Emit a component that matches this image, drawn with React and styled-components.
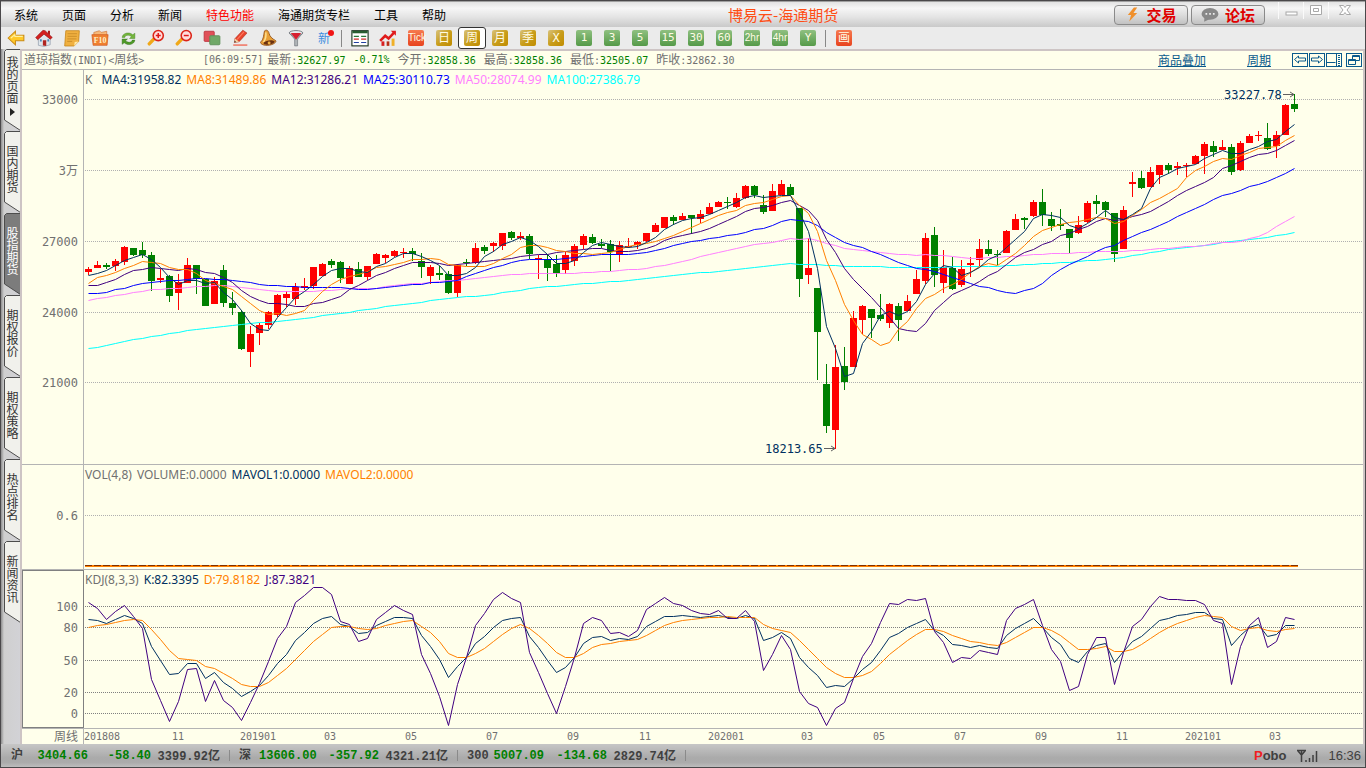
import styled, { createGlobalStyle, css } from 'styled-components';

const GlobalStyle = createGlobalStyle`
  html, body, #root {
    height: 100%;
    margin: 0;
    padding: 0;
    overflow: hidden;
  }
  * {
    box-sizing: border-box;
  }
  body {
    font-family: 'Noto Sans CJK SC', 'Noto Sans', sans-serif;
    font-size: 12px;
    color: #000;
  }
  button {
    font: inherit;
    padding: 0;
    margin: 0;
    border: 0;
    background: none;
    cursor: pointer;
  }
`;

const mono = css`
  font-family: 'DejaVu Sans Mono', 'Noto Sans CJK SC', monospace;
`;

/* ---------- data ---------- */

// r = up week, g = down week, then high, body top, body bottom, low
const CANDLES = `r267,269,272,275 r261,265,268,268 g263,265,267,269 r259,261,266,271 r246,247,262,265
g248,248,255,256 g242,250,255,258 g252,255,281,291 r269,278,280,283 g275,276,296,302
r274,282,293,310 r258,265,283,283 g265,265,279,294 g279,279,306,306 r277,281,304,304
g265,270,303,307 g292,303,308,315 g310,312,349,350 r326,334,352,367 r323,325,333,345
r311,312,325,329 r294,295,315,317 r291,294,298,307 r283,287,299,305 r278,286,288,290
r267,267,286,289 r263,264,276,276 g259,261,265,268 g261,262,278,283 r266,268,284,284
g262,269,277,277 r266,266,277,280 r253,254,264,264 r254,255,258,263 r250,251,256,257
r248,252,253,258 g248,251,254,261 g253,261,267,278 r265,267,276,284 g266,273,275,280
g271,274,293,294 r264,265,293,297 g259,262,263,266 r243,248,263,264 g245,247,251,254
r242,243,246,252 r233,233,246,250 g231,232,238,240 r232,236,238,240 g234,236,254,259
r255,258,259,279 g254,259,268,281 g255,264,273,277 r252,255,270,274 r244,246,261,266
r234,236,245,249 g234,237,243,244 g239,244,246,248 g240,244,252,271 r241,245,254,262
r238,246,247,248 r241,242,245,249 r233,233,241,242 r223,225,232,232 r217,217,228,228
g215,217,221,225 r213,216,220,220 g215,215,218,234 r210,214,219,223 r203,207,214,214
r201,202,207,207 g197,202,203,209 r193,198,207,208 r185,186,198,199 g185,186,195,198
g195,205,212,214 r184,191,211,211 r180,184,195,195 g184,187,195,196 g208,208,279,297
r238,268,275,284 g288,288,332,380 g364,384,426,433 r345,367,430,449 g347,366,382,390
r311,318,367,367 r305,306,320,334 g309,309,318,338 g294,315,319,321 r303,304,323,328
g303,306,320,341 r295,301,311,311 r270,279,294,294 r233,238,281,284 g227,235,275,287
r250,267,283,293 g257,268,289,290 r260,269,285,287 r257,263,265,277 r239,249,260,266
g240,249,254,256 g250,254,255,265 r230,231,253,253 r214,219,230,230 g217,218,220,229
r200,202,216,217 g189,202,215,226 g212,219,226,231 g209,224,226,230 g229,229,238,253
r216,225,233,234 r201,203,222,223 g195,201,204,214 g201,202,210,217 g213,213,254,262
r206,210,249,249 r172,182,184,197 g171,178,188,189 r167,172,187,187 r165,165,175,184
g163,165,170,174 r162,166,168,175 r163,165,166,177 r155,156,164,164 r142,144,156,174
g141,146,152,157 r140,147,150,150 g144,147,172,175 r141,143,170,171 r134,136,143,143
r131,135,136,141 g123,138,149,150 r131,135,146,158 r104,105,135,135 g94,104,109,112`
  .split(/\s+/)
  .map((row) => {
    const [high, top, bottom, low] = row.slice(1).split(',').map(Number);
    const up = row[0] === 'r';
    return { up, high, top, bottom, low, close: up ? top : bottom - 1 };
  });

const PRICE_TOP = 70;
const STEP = 9;
const xAt = (i) => 4 + i * STEP;

// moving average of the closes, the first weeks come from older history
const average = (n, history) =>
  CANDLES.map((_, i) => {
    if (i < history.length) return history[i];
    const part = CANDLES.slice(i - n + 1, i + 1);
    return part.reduce((sum, c) => sum + c.close, 0) / n;
  });

const interpolate = (points) =>
  CANDLES.map((_, i) => {
    const k = points.findIndex(([at]) => at >= i);
    if (k <= 0) return points[0][1];
    const [x0, y0] = points[k - 1];
    const [x1, y1] = points[k];
    return Math.round(y0 + ((y1 - y0) * (i - x0)) / (x1 - x0));
  });

const MA_LINES = [
  {
    color: '#00ffff',
    values: interpolate([
      [0, 348], [2, 345], [4, 341], [7, 336], [11, 330], [17, 324], [22, 320], [28, 313],
      [34, 305], [41, 297], [44, 295], [47, 291], [50, 287], [54, 284], [60, 280], [66, 274],
      [72, 269], [78, 263], [80, 264], [85, 266], [92, 267], [99, 266], [103, 265], [106, 263],
      [110, 261], [114, 258], [120, 249], [124, 245], [127, 241], [131, 237], [134, 232],
    ]),
  },
  {
    color: '#ff80ff',
    values: average(50, [
      300, 298, 297, 295, 294, 292, 291, 289, 289, 288, 288, 287, 286, 286, 285, 285, 286,
      287, 288, 289, 290, 291, 291, 291, 291, 291, 290, 290, 289, 288, 288, 288, 288, 286,
      285, 284, 283, 283, 282, 281, 280, 280, 279, 278, 277, 276, 275, 274, 274,
    ]),
  },
  {
    color: '#0000ff',
    values: average(25, [
      293, 293, 292, 289, 288, 285, 283, 282, 281, 280, 280, 279, 278, 278, 279, 279, 280,
      281, 282, 284, 285, 285, 286, 286,
    ]),
  },
  {
    color: '#400080',
    values: average(12, [285, 285, 282, 279, 274, 270, 269, 267, 268, 269, 270]),
  },
  { color: '#ff8000', values: average(8, [283, 277, 275, 272, 268, 265, 261]) },
  { color: '#003060', values: average(4, [275, 273, 270]) },
];

// depth below the top of the panel, in thirds
const KDJ_J = [
  96, 115, 148, 124, 106, 137, 175, 328, 390, 452, 394, 298, 295, 394, 331, 389, 411, 451,
  397, 340, 273, 204, 169, 95, 76, 52, 50, 73, 152, 163, 214, 203, 148, 125, 106, 119, 133,
  253, 308, 379, 466, 342, 262, 164, 130, 88, 67, 85, 97, 245, 305, 370, 428, 348, 262, 160,
  142, 151, 190, 187, 199, 181, 118, 100, 82, 100, 106, 121, 130, 133, 121, 145, 145, 121,
  152, 301, 253, 196, 236, 364, 400, 412, 466, 415, 397, 325, 259, 220, 157, 100, 103, 88,
  91, 85, 182, 217, 277, 262, 265, 241, 247, 253, 151, 115, 102, 88, 166, 238, 274, 361,
  349, 253, 202, 202, 341, 245, 169, 148, 108, 79, 88, 88, 91, 91, 103, 151, 160, 341, 229,
  166, 140, 232, 212, 142, 148,
];
const KDJ_D = [
  171, 166, 163, 157, 151, 148, 151, 178, 208, 241, 265, 268, 271, 289, 295, 309, 325, 343,
  348, 347, 337, 316, 295, 268, 241, 214, 191, 172, 169, 169, 175, 178, 175, 166, 160, 154,
  151, 167, 186, 212, 250, 262, 262, 248, 234, 212, 191, 175, 163, 175, 194, 220, 247, 262,
  262, 250, 232, 223, 218, 214, 211, 208, 194, 181, 166, 157, 151, 146, 145, 142, 140, 139,
  142, 140, 140, 163, 175, 179, 187, 211, 238, 265, 292, 310, 322, 322, 314, 302, 280, 253,
  232, 211, 193, 178, 178, 184, 196, 205, 214, 217, 223, 226, 217, 202, 187, 172, 172, 181,
  196, 217, 238, 238, 235, 229, 244, 244, 236, 223, 205, 187, 172, 160, 151, 142, 136, 139,
  142, 169, 179, 175, 172, 181, 184, 178, 175,
];
const KDJ_K = KDJ_J.map((j, i) => (j + 2 * KDJ_D[i]) / 3);

const DATES = [
  ['201808', 0], ['11', 88], ['201901', 156], ['03', 240], ['05', 321], ['07', 402],
  ['09', 483], ['11', 555], ['202001', 624], ['03', 717], ['05', 789], ['07', 870],
  ['09', 951], ['11', 1032], ['202101', 1101], ['03', 1185],
];

const MENUS = ['系统', '页面', '分析', '新闻', '特色功能', '海通期货专栏', '工具', '帮助'];
const TABS = ['我的页面', '国内期货', '股指期货', '期权报价', '期权策略', '热点排名', '新闻资讯'];

const INDEXES = [
  { name: '沪', last: '3404.66', change: '-58.40', amount: '3399.92' },
  { name: '深', last: '13606.00', change: '-357.92', amount: '4321.21' },
  { name: '300', last: '5007.09', change: '-134.68', amount: '2829.74' },
];

/* ---------- frame ---------- */

const Window = styled.div`
  height: 100vh;
  display: flex;
  flex-direction: column;
  border: 1px solid #4a484a;
  background: #ebebeb;
`;

const TitleBar = styled.header`
  height: 26px;
  flex-shrink: 0;
  display: flex;
  align-items: center;
  border-top: 1px solid #a0a0a0;
  background: linear-gradient(#e2e2e2, #f6f6f6 25%, #e4e4e4 60%, #c9c9c9);
`;

const MenuList = styled.nav`
  display: flex;
  padding-left: 1px;
`;

const MenuItem = styled.button`
  padding: 0 12px;
  line-height: 20px;
  color: ${(p) => (p.$hot ? '#ff0000' : '#000')};
`;

const AppTitle = styled.h1`
  flex: 1;
  margin: 0;
  padding-right: 6px;
  text-align: center;
  font-size: 15px;
  font-weight: 400;
  line-height: 22px;
  color: #ff4d14;
`;

const PillButton = styled.button`
  width: 74px;
  height: 20px;
  margin-right: 3px;
  display: flex;
  align-items: center;
  justify-content: center;
  gap: 6px;
  border: 1px solid #8a8a8a;
  border-radius: 4px;
  background: linear-gradient(#f2f2f2, #dcdcdc 50%, #c2c2c2);
  font-size: 15px;
  font-weight: 700;
  line-height: 16px;
  color: #e00000;
`;

const WindowControls = styled.div`
  display: flex;
  align-self: flex-start;
  margin-left: 10px;
  padding-right: 3px;
`;

const WindowButton = styled.button`
  width: ${(p) => (p.$wide ? 34 : 25)}px;
  height: 17px;
  display: flex;
  align-items: center;
  justify-content: center;
  border-left: 1px solid #fafafa;
`;

const ToolBar = styled.div`
  height: 22px;
  flex-shrink: 0;
  display: flex;
  align-items: center;
  padding-left: 1px;
  background: #ebebeb;
`;

const ToolButton = styled.button`
  width: 28px;
  height: 22px;
  display: flex;
  align-items: center;
  justify-content: center;
  ${(p) =>
    p.$active &&
    css`
      border: 1px solid #333;
      border-radius: 3px;
      background: #fff;
    `}
`;

const ToolSeparator = styled.span`
  width: 1px;
  height: 17px;
  margin: 0 4px 0 3px;
  background: #888;
`;

const tones = {
  gold: 'linear-gradient(135deg, #d8c27c, #c99e1c 50%, #c08c00)',
  green: 'linear-gradient(#8fc080, #559a48)',
  red: 'linear-gradient(#f67a50, #e8441e)',
};

const Tile = styled.span`
  width: 16px;
  height: 16px;
  border-radius: 2px;
  background: ${(p) => tones[p.$tone]};
  color: #fffbe4;
  font-family: ${(p) =>
    p.$narrow
      ? "'Liberation Sans Narrow', 'Liberation Sans', sans-serif"
      : "'DejaVu Sans Mono', 'Noto Sans CJK SC', monospace"};
  font-size: ${(p) => p.$size || 12}px;
  line-height: 16px;
  text-align: center;
`;

const NewMark = styled.span`
  position: relative;
  line-height: 16px;
  font-size: 12px;
  color: #3d8ee0;

  &::after {
    content: '';
    position: absolute;
    top: 0;
    right: -4px;
    width: 6px;
    height: 6px;
    border-radius: 50%;
    background: #f01414;
  }
`;

const Body = styled.div`
  flex: 1;
  min-height: 0;
  display: flex;
`;

const SideTabs = styled.nav`
  width: 19px;
  flex-shrink: 0;
  padding-left: 3px;
  background: linear-gradient(90deg, #8e8e8e, #cfcfcf 3px, #d2d2d6);
  display: flex;
  flex-direction: column;
`;

const SideTab = styled.button`
  height: 82px;
  flex-shrink: 0;
  display: grid;
  color: ${(p) => (p.$active ? '#fff' : '#333')};

  svg,
  span {
    grid-area: 1 / 1;
  }
  path {
    fill: ${(p) => (p.$active ? '#7c7c7c' : '#f1f1ec')};
    stroke: #4c4c4c;
  }
`;

const SideLabel = styled.span`
  height: 76px;
  display: flex;
  align-items: center;
  justify-content: center;
  writing-mode: vertical-rl;
  text-orientation: upright;
  line-height: 16px;
  z-index: 1;
`;

const Sheet = styled.main`
  flex: 1;
  min-width: 0;
  display: flex;
  flex-direction: column;
  border: solid #cdc4c4;
  border-width: 2px 2px 0 2px;
  background: #ffffeb;
`;

/* ---------- quote line ---------- */

const QuoteRow = styled.div`
  height: 19px;
  flex-shrink: 0;
  display: flex;
  align-items: center;
  gap: 8px;
  padding: 0 1px 1px 2px;
  border-bottom: 1px solid #b4b4b4;
  color: #707070;
  line-height: 18px;
  white-space: nowrap;
`;

const Digits = styled.span`
  ${mono}
  font-size: 10px;
  color: ${(p) => (p.$down ? '#008000' : 'inherit')};
`;

const Instrument = styled.span`
  width: 171px;
`;

const Clock = styled(Digits)`
  margin-right: -4px;
`;

const QuoteTools = styled.div`
  margin-left: auto;
  display: flex;
  align-items: center;
`;

const ToolLink = styled.a`
  margin-right: ${(p) => p.$gap}px;
  color: #0a5a8c;
  text-decoration: underline;
`;

const NavButton = styled.button`
  width: 16px;
  height: 14px;
  margin-right: 1px;
  border: 1px solid #0a5a8c;
  display: flex;
  align-items: center;
  justify-content: center;

  &:last-child {
    margin: 0 0 0 3px;
  }
`;

/* ---------- charts ---------- */

const Panel = styled.section`
  display: flex;
  border-bottom: 1px solid #b4b4b4;
  min-height: 0;
  ${(p) =>
    p.$height
      ? css`
          height: ${p.$height}px;
          flex-shrink: 0;
        `
      : css`
          flex: 1;
        `}
`;

const Axis = styled.svg`
  width: 62px;
  height: 100%;
  flex-shrink: 0;
  border-right: 1px solid #b4b4b4;
  ${(p) => p.$boxed && 'border: 1px solid #808080;'}

  text {
    ${mono}
    font-size: 12px;
    fill: #707070;
    text-anchor: end;
  }
`;

const PlotArea = styled.div`
  flex: 1;
  min-width: 0;
  display: grid;
  grid-template-rows: 100%;
`;

const Plot = styled.svg`
  grid-area: 1 / 1;
  width: 100%;
  height: 100%;
  display: block;
`;

const Legend = styled.div`
  grid-area: 1 / 1;
  display: flex;
  align-self: start;
  gap: 5px;
  padding: 1px 0 0 1px;
  font-family: 'Noto Sans', sans-serif;
  font-size: 12px;
  line-height: 18px;
  white-space: nowrap;
  z-index: 1;
`;

const LegendItem = styled.span`
  color: ${(p) => p.$color};
  padding-right: ${(p) => (p.$lead ? 4 : 0)}px;
`;

const PriceTag = styled.text`
  ${mono}
  font-size: 12px;
  fill: #003060;
`;

const DateRow = styled.div`
  height: 15px;
  flex-shrink: 0;
  display: flex;
  color: #707070;
`;

const PeriodName = styled.span`
  width: 62px;
  padding-right: 5px;
  border-right: 1px solid #b4b4b4;
  text-align: right;
  line-height: 14px;
`;

const DateAxis = styled.svg`
  flex: 1;
  height: 15px;

  text {
    ${mono}
    font-size: 10px;
    fill: #707070;
  }
`;

/* ---------- status bar ---------- */

const StatusBar = styled.footer`
  height: 23px;
  flex-shrink: 0;
  display: flex;
  align-items: center;
  padding: 0 4px 0 10px;
  background: linear-gradient(#c6c6c6, #aaaaaa 60%, #ababab 80%, #bdbdbd);
  color: #404040;
  line-height: 22px;
`;

const IndexGroup = styled.div`
  width: 228px;
  display: grid;
  grid-template-columns: 20px 57px 63px 69px 1px;
  align-items: center;
  font-weight: 700;
  text-align: right;
  white-space: nowrap;

  &::after {
    content: '';
    height: 11px;
    margin-left: 9px;
    border-left: 1px solid #8a8a8a;
  }
`;

const IndexName = styled.span`
  font-family: 'Liberation Mono', 'Noto Sans CJK SC', monospace;
  text-align: left;
`;

const IndexValue = styled.span`
  font-family: 'Liberation Mono', monospace;
  font-size: 12px;
  color: ${(p) => (p.$plain ? '#404040' : '#008000')};
`;

const StatusRight = styled.div`
  margin-left: auto;
  display: flex;
  align-items: center;
  gap: 10px;
  font-family: 'Liberation Sans', sans-serif;
  font-size: 13px;
`;

const Brand = styled.b`
  &::first-letter {
    color: #f02020;
  }
  display: inline-block;
`;

/* ---------- icons ---------- */

const Icon = ({ children, size = 18 }) => (
  <svg width={size} height={size} viewBox="0 0 16 16" aria-hidden="true">
    {children}
  </svg>
);

const BackIcon = () => (
  <Icon>
    <path d="M1 8 7.5 2v3.5H15v5H7.5V14z" fill="#ffc928" stroke="#c98a14" strokeWidth=".9" />
    <path d="M3.500 8 7 5V6.500h7" fill="none" stroke="#fff0a0" />
  </Icon>
);

const HomeIcon = () => (
  <Icon>
    <path d="M3 7.5v7l5 1 5.5-1.5V7L8.5 3z" fill="#dfe5ea" stroke="#8c98a8" strokeWidth=".6" />
    <path d="M.6 7.6 7 1.2l2 .3 6.4 6-1.8 1.500L8 4.600 2.4 9.500z" fill="#d42020" stroke="#8a1212" strokeWidth=".5" />
    <path d="M11.5 1.5h1.8v4l-1.8-1.6z" fill="#a81818" />
    <path d="M7 10h3v5.2l-3-.5z" fill="#b02420" />
    <path d="M4.4 9h1.6v2H4.4zM11 9h1.5v2H11z" fill="#4a88b8" />
  </Icon>
);

const NoteIcon = () => (
  <Icon>
    <path d="M2.5 1.5h12l-.6 9.6-4 4H1.5z" fill="#f0b040" stroke="#c68418" strokeWidth=".7" />
    <path d="m13.9 11.1-4 4 .5-3.6z" fill="#ffe9a8" />
    <path d="M4 4.2h8.5M4 6.5h8.3M3.8 8.8h8.2M3.7 11h4.5" stroke="#c88c28" strokeWidth=".8" />
  </Icon>
);

const F10Icon = () => (
  <Icon>
    <path d="m2.5 3 5-1.5L9 3l5-1v5H2.5z" fill="#f7b878" stroke="#c86828" strokeWidth=".5" />
    <path d="M.8 5h14.4l-.9 9.5H1.9z" fill="#f08030" stroke="#d05418" strokeWidth=".6" />
    <text x="8" y="12" textAnchor="middle" fontFamily="Liberation Serif, serif" fontWeight="700" fontSize="7" fill="#fff0c8">
      F10
    </text>
  </Icon>
);

const RefreshIcon = () => (
  <Icon size={17}>
    <path d="M2 7C2.500 2.500 9 1.500 12 4.500L14 3v5H9l1.700-1.700C8.500 4.300 5 4.500 4.500 7z" fill="#74b43c" stroke="#3e8020" strokeWidth=".4" />
    <path d="M14 9.500c-.5 4.500-7 5.500-10 2.500L2 13.500v-5h5L5.300 10.200c2.200 2 5.700 1.800 6.200-.7z" fill="#4f9a28" stroke="#2e6c18" strokeWidth=".4" />
  </Icon>
);

const ZoomIcon = ({ plus }) => (
  <Icon>
    <path d="m6 9-4 4.200" stroke="#f0a818" strokeWidth="3" strokeLinecap="round" />
    <circle cx="10" cy="5.800" r="4.500" fill="#ffdcdc" stroke="#dc2418" strokeWidth="1.400" />
    <path d={plus ? 'M7.800 5.800h4.400M10 3.600V8' : 'M7.800 5.800h4.400'} stroke="#e01818" strokeWidth="1.300" />
  </Icon>
);

const LayersIcon = () => (
  <Icon>
    <rect x="1" y="2" width="9" height="9" rx=".8" fill="#e05058" stroke="#b82c38" strokeWidth=".7" />
    <rect x="6" y="6" width="9" height="8" rx=".8" fill="#70a868" stroke="#5c9058" strokeWidth=".8" />
  </Icon>
);

const PencilIcon = () => (
  <Icon>
    <path d="m3 12 .6-3.500L10.500 1l3.700 2.600-7 7.700z" fill="#e8442c" stroke="#a82418" strokeWidth=".5" />
    <path d="m5.500 9.200 6-6.700" stroke="#ff7860" strokeWidth="1" />
    <path d="m3 12 .6-3.500 3.600 2.800z" fill="#f4d0a0" />
    <path d="m3 12 .3-1.500 1.200 1z" fill="#222" />
    <path d="M2 14.300h12.500" stroke="#f08070" strokeWidth="1.500" />
  </Icon>
);

const BellIcon = () => (
  <Icon>
    <path d="M5 1.600c2-1.400 3.500.2 4 2.400.5 2.500 2.500 4.500 6 6.500.6 2-4.500 4.500-9 4C2.500 14.300.800 12.300 1.500 11.500 4.500 9 4 4 5 1.600z" fill="#e8a038" stroke="#8a4810" strokeWidth=".7" />
    <path d="M6 3c.5 3 0 6-2 8.500" stroke="#ffe090" strokeWidth="1.300" fill="none" />
    <ellipse cx="9" cy="12" rx="5" ry="1.800" transform="rotate(-10 9 12)" fill="#6a3010" />
    <circle cx="9" cy="12.400" r="1.300" fill="#f0b040" />
  </Icon>
);

const FunnelIcon = () => (
  <Icon>
    <path d="M2 3.500 6.800 9v6h2.600V9L14 3.500z" fill="#b0b4b8" stroke="#70767c" strokeWidth=".6" />
    <ellipse cx="8" cy="3.500" rx="6" ry="2.100" fill="#e8eaec" stroke="#70767c" strokeWidth=".8" />
    <path d="M3.400 3.600h9.200L8 9.500z" fill="#d82030" />
  </Icon>
);

const TableIcon = () => (
  <Icon>
    <rect x=".8" y="1.500" width="14.400" height="13.500" fill="#fff" stroke="#1c3420" />
    <path d="M1.200 2.800h13.600" stroke="#285c30" strokeWidth="2" />
    <path d="M2.500 6.500H7M9 6.500h4.500" stroke="#287838" />
    <path d="M2.500 9H7M9 9h4.500" stroke="#d02828" />
    <path d="M2.500 12H7M9 12h4.500" stroke="#2040a0" />
  </Icon>
);

const TrendIcon = () => (
  <Icon>
    <path d="M3.500 11v4" stroke="#d82020" strokeWidth="2.600" />
    <path d="M12.500 8.500V15" stroke="#f0b028" strokeWidth="2.600" />
    <path d="M8 11v4" stroke="#b83018" strokeWidth="2.400" />
    <path d="M1 10.500 5.500 6l3 2.500L14 2.500" fill="none" stroke="#e01c1c" strokeWidth="2.300" />
    <path d="M10.500 1.500H15V6z" fill="#e01c1c" />
  </Icon>
);

const BoltIcon = () => (
  <Icon size={15}>
    <path d="M9.500.5 3 8.500h3.500L4.500 15.500 13 6.500H9L13 .5z" fill="#f0902c" />
  </Icon>
);

const ChatIcon = () => (
  <Icon size={18}>
    <ellipse cx="8" cy="7" rx="7.500" ry="5.300" fill="#888" />
    <path d="M3 10.500 2.800 14 8 11.500z" fill="#888" />
    <path d="M4 7h1.500M7.300 7h1.500M10.600 7h1.500" stroke="#eee" strokeWidth="1.500" />
  </Icon>
);

const TOOLS = [
  ['后退', <BackIcon />],
  ['首页', <HomeIcon />],
  ['记事', <NoteIcon />],
  ['资料', <F10Icon />],
  ['刷新', <RefreshIcon />],
  ['放大', <ZoomIcon plus />],
  ['缩小', <ZoomIcon />],
  ['叠加', <LayersIcon />],
  ['画线', <PencilIcon />],
  ['预警', <BellIcon />],
  ['过滤', <FunnelIcon />],
  ['新', <NewMark>新</NewMark>],
];

const PERIODS = [
  ['Tick', 'red', 10, true],
  ['日', 'gold'],
  ['周', 'gold'],
  ['月', 'gold'],
  ['季', 'gold'],
  ['X', 'gold'],
  ['1', 'green', 11],
  ['3', 'green', 11],
  ['5', 'green', 11],
  ['15', 'green', 11],
  ['30', 'green', 11],
  ['60', 'green', 11],
  ['2hr', 'green', 10, true],
  ['4hr', 'green', 10, true],
  ['Y', 'green', 11],
];

/* ---------- pieces ---------- */

function Line({ values, color }) {
  return (
    <polyline
      points={values.map((v, i) => `${xAt(i) + 0.5},${Math.round(v) + 0.5}`).join(' ')}
      fill="none"
      stroke={color}
      strokeWidth="1"
    />
  );
}

function Grid({ rows, color = '#b0b0b0' }) {
  return rows.map((y) => (
    <line key={y} x1="1" x2="100%" y1={y + 0.5} y2={y + 0.5} stroke={color} strokeDasharray="1 1" shapeRendering="crispEdges" />
  ));
}

function AxisLabels({ labels, right = 56 }) {
  return labels.map(([text, y]) => (
    <text key={text} x={right} y={y + 5}>
      {text}
    </text>
  ));
}

function PricePanel() {
  return (
    <Panel>
      <Axis>
        <AxisLabels labels={[['33000', 29], ['3万', 100], ['27000', 171], ['24000', 242], ['21000', 312]]} />
      </Axis>
      <PlotArea>
        <Legend>
          <LegendItem $color="#707070" $lead>K</LegendItem>
          <LegendItem $color="#003060">MA4:31958.82</LegendItem>
          <LegendItem $color="#ff8000">MA8:31489.86</LegendItem>
          <LegendItem $color="#400080">MA12:31286.21</LegendItem>
          <LegendItem $color="#0000ff">MA25:30110.73</LegendItem>
          <LegendItem $color="#ff80ff">MA50:28074.99</LegendItem>
          <LegendItem $color="#00ffff">MA100:27386.79</LegendItem>
        </Legend>
        <Plot role="img" aria-label="周线">
          <Grid rows={[29, 100, 171, 242, 312]} />
          {CANDLES.map((c, i) => (
            <g key={i} fill={c.up ? '#ff0000' : '#008000'} shapeRendering="crispEdges">
              <rect x={xAt(i)} y={c.high - PRICE_TOP} width="1" height={c.low - c.high} />
              <rect x={xAt(i) - 3} y={c.top - PRICE_TOP} width="7" height={c.bottom - c.top} />
            </g>
          ))}
          {MA_LINES.map((l) => (
            <Line key={l.color} color={l.color} values={l.values.map((v) => v - PRICE_TOP)} />
          ))}
          <PriceTag x="1140" y="29">33227.78</PriceTag>
          <path d="M1199 24.500h11M1206 22l4 2.500-4 2.500" fill="none" stroke="#606060" />
          <PriceTag x="681" y="383">18213.65</PriceTag>
          <path d="M740 378.500h11M747 376l4 2.500-4 2.500" fill="none" stroke="#606060" />
        </Plot>
      </PlotArea>
    </Panel>
  );
}

function VolumePanel() {
  return (
    <Panel $height={105}>
      <Axis>
        <AxisLabels labels={[['0.6', 50]]} />
      </Axis>
      <PlotArea>
        <Legend>
          <LegendItem $color="#707070">VOL(4,8)</LegendItem>
          <LegendItem $color="#707070">VOLUME:0.0000</LegendItem>
          <LegendItem $color="#003060">MAVOL1:0.0000</LegendItem>
          <LegendItem $color="#ff8000">MAVOL2:0.0000</LegendItem>
        </Legend>
        <Plot role="img" aria-label="VOL">
          <Grid rows={[50]} />
          <g shapeRendering="crispEdges">
            <rect x="1" y="100" width="1213" height="2" fill="#ff8000" />
            <line x1="1" x2="1214" y1="100.5" y2="100.5" stroke="#803000" strokeDasharray="7 2" />
          </g>
        </Plot>
      </PlotArea>
    </Panel>
  );
}

function KdjPanel() {
  return (
    <Panel $height={159}>
      <Axis $boxed>
        <AxisLabels right={55} labels={[['100', 35], ['80', 56], ['50', 89], ['20', 121], ['0', 142]]} />
      </Axis>
      <PlotArea>
        <Legend>
          <LegendItem $color="#707070">KDJ(8,3,3)</LegendItem>
          <LegendItem $color="#003060">K:82.3395</LegendItem>
          <LegendItem $color="#ff8000">D:79.8182</LegendItem>
          <LegendItem $color="#400080">J:87.3821</LegendItem>
        </Legend>
        <Plot role="img" aria-label="KDJ">
          <Grid rows={[36, 57, 90, 122, 143]} color="#808080" />
          <Line color="#003060" values={KDJ_K.map((v) => v / 3)} />
          <Line color="#ff8000" values={KDJ_D.map((v) => v / 3)} />
          <Line color="#400080" values={KDJ_J.map((v) => v / 3)} />
        </Plot>
      </PlotArea>
    </Panel>
  );
}

const Quote = ({ name, value, down }) => (
  <span>
    {name}
    <Digits>:</Digits>
    <Digits $down={down}>{value}</Digits>
  </span>
);

export default function App() {
  return (
    <>
      <GlobalStyle />
      <Window>
        <TitleBar>
          <MenuList>
            {MENUS.map((m) => (
              <MenuItem key={m} $hot={m === '特色功能'}>{m}</MenuItem>
            ))}
          </MenuList>
          <AppTitle>博易云-海通期货</AppTitle>
          <PillButton><BoltIcon />交易</PillButton>
          <PillButton><ChatIcon />论坛</PillButton>
          <WindowControls>
            <WindowButton aria-label="最小化">
              <svg width="13" height="13"><rect x="1" y="8" width="11" height="3" fill="#fff" stroke="#a8a8a8" /></svg>
            </WindowButton>
            <WindowButton aria-label="最大化">
              <svg width="13" height="13">
                <path d="M.5 1.500h11v9H.5zM3.500 4.500h5v3h-5z" fill="#fff" stroke="#a8a8a8" />
              </svg>
            </WindowButton>
            <WindowButton aria-label="关闭" $wide>
              <svg width="13" height="13">
                <path d="M.5 1.500h4l1.500 2 1.500-2h4L8 6l3.500 4.500h-4L6 8.500l-1.500 2h-4L4 6z" fill="#fff" stroke="#a8a8a8" />
              </svg>
            </WindowButton>
          </WindowControls>
        </TitleBar>

        <ToolBar>
          {TOOLS.map(([name, icon]) => (
            <ToolButton key={name} aria-label={name}>{icon}</ToolButton>
          ))}
          <ToolSeparator />
          <ToolButton aria-label="报价"><TableIcon /></ToolButton>
          <ToolButton aria-label="走势"><TrendIcon /></ToolButton>
          {PERIODS.map(([name, tone, size, narrow]) => (
            <ToolButton key={name} $active={name === '周'}>
              <Tile $tone={tone} $size={size} $narrow={narrow}>{name}</Tile>
            </ToolButton>
          ))}
          <ToolSeparator />
          <ToolButton><Tile $tone="red">画</Tile></ToolButton>
        </ToolBar>

        <Body>
          <SideTabs>
            {TABS.map((t) => (
              <SideTab key={t} $active={t === '股指期货'}>
                <svg width="16" height="82">
                  <path d="M16.500.5H2.500L.5 2.500V71L16.500 81.500" />
                </svg>
                <SideLabel>
                  {t}
                  {t === '我的页面' && (
                    <svg width="5" height="14"><polygon points="0,4 5,8 0,12" fill="#222" /></svg>
                  )}
                </SideLabel>
              </SideTab>
            ))}
          </SideTabs>

          <Sheet>
            <QuoteRow>
              <Instrument>道琼指数<Digits>(INDI)&lt;</Digits>周线<Digits>&gt;</Digits></Instrument>
              <Clock>[06:09:57]</Clock>
              <Quote name="最新" value="32627.97" down />
              <Digits $down>-0.71%</Digits>
              <Quote name="今开" value="32858.36" down />
              <Quote name="最高" value="32858.36" down />
              <Quote name="最低" value="32505.07" down />
              <Quote name="昨收" value="32862.30" />
              <QuoteTools>
                <ToolLink href="#overlay" $gap={41}>商品叠加</ToolLink>
                <ToolLink href="#period" $gap={21}>周期</ToolLink>
                <NavButton aria-label="向左">
                  <svg width="14" height="12"><path d="M1.500 5.500 5.500 2v2h7v3h-7v2z" fill="none" stroke="#0a5a8c" /></svg>
                </NavButton>
                <NavButton aria-label="向右">
                  <svg width="14" height="12"><path d="M12.500 5.500 8.500 2v2h-7v3h7v2z" fill="none" stroke="#0a5a8c" /></svg>
                </NavButton>
                <NavButton aria-label="侧栏">
                  <svg width="14" height="12">
                    <path d="M0 8.500h8.500M9.500 0v12" fill="none" stroke="#0a5a8c" />
                    <path d="M12 1v11" stroke="#0a5a8c" strokeWidth="2" strokeDasharray="1 1" />
                  </svg>
                </NavButton>
                <NavButton aria-label="还原">
                  <svg width="14" height="12">
                    <path d="M5.500 5V1.500h7v5H9M5 2.500h8M1.500 5.500h7v5h-7zM1 6.500h8" fill="none" stroke="#0a5a8c" />
                  </svg>
                </NavButton>
              </QuoteTools>
            </QuoteRow>
            <PricePanel />
            <VolumePanel />
            <KdjPanel />
            <DateRow>
              <PeriodName>周线</PeriodName>
              <DateAxis>
                {DATES.map(([text, x]) => (
                  <text key={x} x={x} y="11">{text}</text>
                ))}
              </DateAxis>
            </DateRow>
          </Sheet>
        </Body>

        <StatusBar>
          {INDEXES.map((s) => (
            <IndexGroup key={s.name}>
              <IndexName>{s.name}</IndexName>
              <IndexValue>{s.last}</IndexValue>
              <IndexValue>{s.change}</IndexValue>
              <span><IndexValue $plain>{s.amount}</IndexValue>亿</span>
            </IndexGroup>
          ))}
          <StatusRight>
            <Brand>Pobo</Brand>
            <svg width="22" height="14" aria-hidden="true">
              <path d="M1 1.500h9M2 2l3.500 4L9 2M5.500 2v11" fill="none" stroke="#404040" strokeWidth="1.500" />
              <path d="M10 11v2M13.500 9v4M17 6v7M20.500 2v11" stroke="#404040" strokeWidth="1.500" />
            </svg>
            <span>16:36</span>
          </StatusRight>
        </StatusBar>
      </Window>
    </>
  );
}
